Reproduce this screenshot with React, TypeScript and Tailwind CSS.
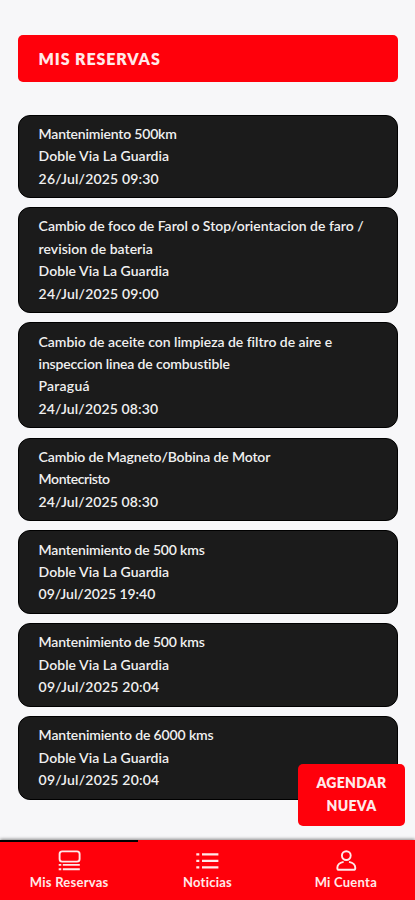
import React from 'react';

type Line = { text: string; tracking: string };

const branch: Line = { text: 'Doble Via La Guardia', tracking: 'tracking-[0.03px]' };

const reservations: Line[][] = [
  [
    { text: 'Mantenimiento 500km', tracking: 'tracking-[-0.19px]' },
    branch,
    { text: '26/Jul/2025 09:30', tracking: 'tracking-[0.17px]' },
  ],
  [
    { text: 'Cambio de foco de Farol o Stop/orientacion de faro /', tracking: 'tracking-[-0.01px]' },
    { text: 'revision de bateria', tracking: 'tracking-[0.03px]' },
    branch,
    { text: '24/Jul/2025 09:00', tracking: 'tracking-[0.17px]' },
  ],
  [
    { text: 'Cambio de aceite con limpieza de filtro de aire e', tracking: 'tracking-[-0.03px]' },
    { text: 'inspeccion linea de combustible', tracking: 'tracking-[-0.15px]' },
    { text: 'Paraguá', tracking: 'tracking-[0.2px]' },
    { text: '24/Jul/2025 08:30', tracking: 'tracking-[0.14px]' },
  ],
  [
    { text: 'Cambio de Magneto/Bobina de Motor', tracking: 'tracking-[-0.14px]' },
    { text: 'Montecristo', tracking: 'tracking-[-0.42px]' },
    { text: '24/Jul/2025 08:30', tracking: 'tracking-[0.14px]' },
  ],
  [
    { text: 'Mantenimiento de 500 kms', tracking: 'tracking-[-0.17px]' },
    branch,
    { text: '09/Jul/2025 19:40', tracking: 'tracking-[-0.04px]' },
  ],
  [
    { text: 'Mantenimiento de 500 kms', tracking: 'tracking-[-0.17px]' },
    branch,
    { text: '09/Jul/2025 20:04', tracking: 'tracking-[0.2px]' },
  ],
  [
    { text: 'Mantenimiento de 6000 kms', tracking: 'tracking-[-0.13px]' },
    branch,
    { text: '09/Jul/2025 20:04', tracking: 'tracking-[0.2px]' },
  ],
];

function ReservationCard({ lines }: { lines: Line[] }) {
  return (
    <article className="rounded-[12px] border border-black bg-[#1b1b1b] py-[7.2px] pl-[19.6px] text-[14px] font-semibold leading-[22.4px] text-[#f0f0f0]">
      {lines.map((line, i) => (
        <p key={i} className={`whitespace-nowrap ${line.tracking}`}>
          {line.text}
        </p>
      ))}
    </article>
  );
}

function ReservationsIcon() {
  return (
    <svg width="24" height="24" viewBox="0 0 24 24" fill="none" stroke="#ffe9e9" strokeWidth="1.9">
      <rect x="2.6" y="2.4" width="20" height="10.2" rx="2.6" />
      <path d="M1.7 15.9h2.6M5.8 15.9h17M1.7 20.2h2.6M5.8 20.2h17" />
    </svg>
  );
}

function NewsIcon() {
  return (
    <svg width="24" height="24" viewBox="0 0 24 24" fill="none" stroke="#ffe9e9" strokeWidth="2.2">
      <path d="M1.3 5.4h3M7 5.4h16.4M1.3 11.8h3M7 11.8h16.4M1.3 18.3h3M7 18.3h16.4" />
    </svg>
  );
}

function AccountIcon() {
  return (
    <svg width="24" height="24" viewBox="0 0 24 24" fill="none" stroke="#ffe9e9" strokeWidth="1.9">
      <circle cx="12.3" cy="6.6" r="4.4" />
      <path d="M9.6 12.9C5.8 13.7 3.3 16.2 3.3 18.9c0 1.3.6 1.9 1.8 1.9h14.4c1.2 0 1.8-.6 1.8-1.9 0-2.7-2.5-5.2-6.3-6" />
    </svg>
  );
}

const tabs = [
  { label: 'Mis Reservas', icon: <ReservationsIcon /> },
  { label: 'Noticias', icon: <NewsIcon /> },
  { label: 'Mi Cuenta', icon: <AccountIcon /> },
];

export default function App() {
  return (
    <div className="relative flex h-[900px] w-[415px] flex-col overflow-hidden bg-[#f7f7f9] font-['Lato',sans-serif] [font-variant-ligatures:none]">
      <main className="flex-1 px-[18px] pt-[35px]">
        <h1 className="flex h-[47px] w-[380px] items-center rounded-[5px] bg-[#ff000b] pl-[20.5px] text-[16px] font-extrabold tracking-[0.9px] text-[#ffe9e9]">
          MIS RESERVAS
        </h1>
        <section className="mt-[32.5px] flex w-[380px] flex-col gap-[9.2px]">
          {reservations.map((lines, i) => (
            <ReservationCard key={i} lines={lines} />
          ))}
        </section>
      </main>
      <button className="absolute left-[298px] top-[764px] flex h-[62px] w-[107px] flex-col items-center justify-center rounded-[5px] bg-[#ff000b] pb-px text-[14px] font-extrabold leading-[22.4px] tracking-[0.3px] text-[#ffe9e9]">
        <span>AGENDAR</span>
        <span>NUEVA</span>
      </button>
      <nav className="grid h-[60px] shrink-0 grid-cols-3 bg-[#ff000b] shadow-[0_-1px_3px_rgba(0,0,0,0.45)]">
        {tabs.map((tab, i) => (
          <div
            key={tab.label}
            className={`flex flex-col items-center border-t-2 pt-[7px] text-[13px] font-bold leading-[16px] tracking-[0.25px] text-[#ffe9e9] ${i === 0 ? 'border-black' : 'border-transparent'}`}
          >
            {tab.icon}
            <span className="mt-px whitespace-nowrap">{tab.label}</span>
          </div>
        ))}
      </nav>
    </div>
  );
}
